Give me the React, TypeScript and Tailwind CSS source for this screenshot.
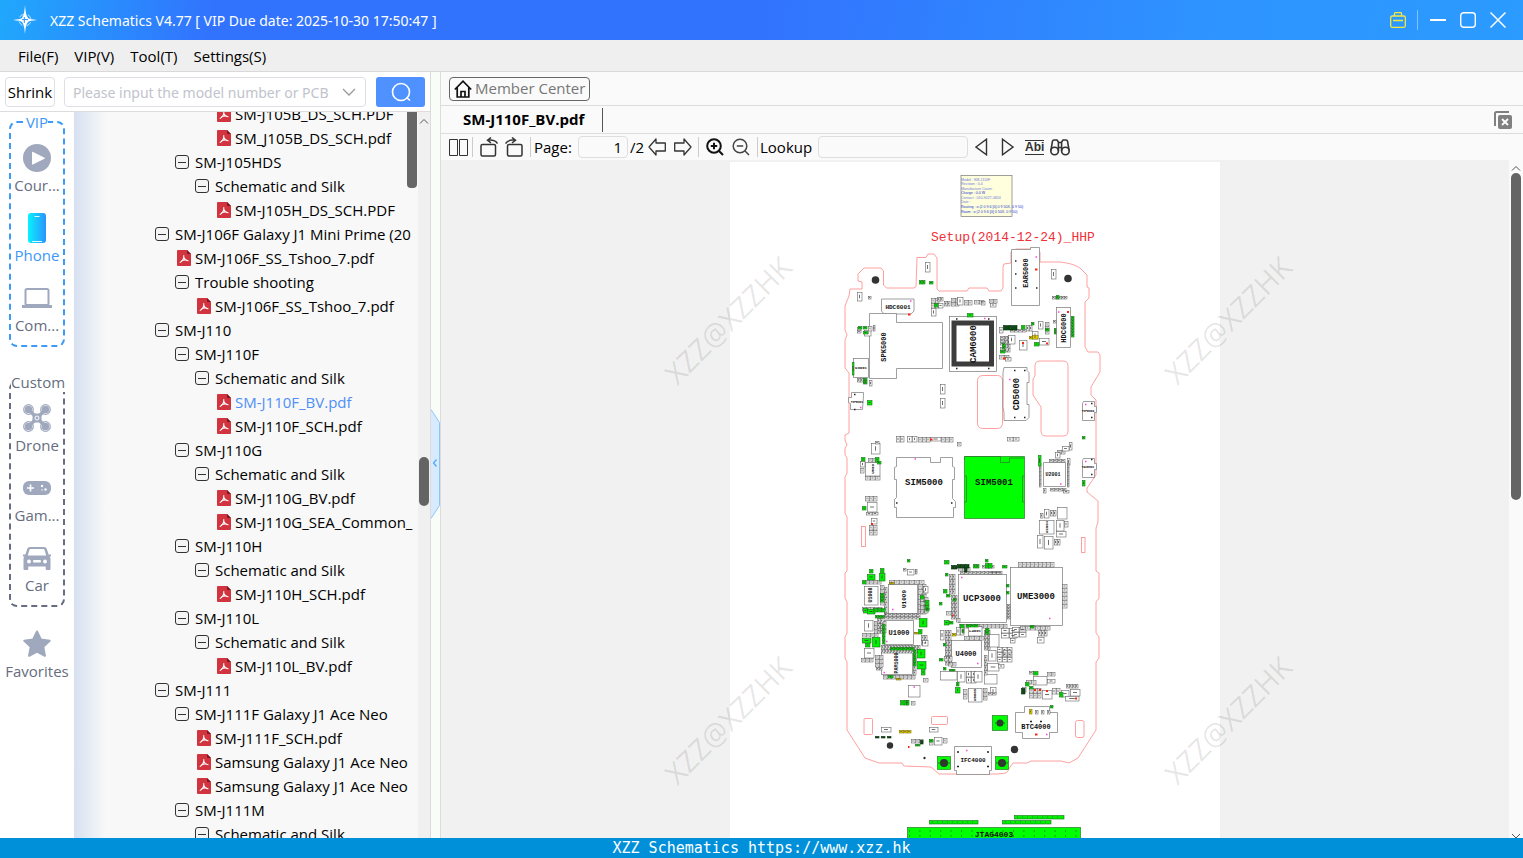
import { useEffect, useRef, useState } from 'react';
import type { ReactNode } from 'react';
import clsx from 'clsx';

type TreeNode = { label: string; level: number; file?: boolean };

const TREE: TreeNode[] = [
  { label: 'SM-J105B_DS_SCH.PDF', level: 3, file: true },
  { label: 'SM_J105B_DS_SCH.pdf', level: 3, file: true },
  { label: 'SM-J105HDS', level: 1 },
  { label: 'Schematic and Silk', level: 2 },
  { label: 'SM-J105H_DS_SCH.PDF', level: 3, file: true },
  { label: 'SM-J106F Galaxy J1 Mini Prime (20', level: 0 },
  { label: 'SM-J106F_SS_Tshoo_7.pdf', level: 1, file: true },
  { label: 'Trouble shooting', level: 1 },
  { label: 'SM-J106F_SS_Tshoo_7.pdf', level: 2, file: true },
  { label: 'SM-J110', level: 0 },
  { label: 'SM-J110F', level: 1 },
  { label: 'Schematic and Silk', level: 2 },
  { label: 'SM-J110F_BV.pdf', level: 3, file: true },
  { label: 'SM-J110F_SCH.pdf', level: 3, file: true },
  { label: 'SM-J110G', level: 1 },
  { label: 'Schematic and Silk', level: 2 },
  { label: 'SM-J110G_BV.pdf', level: 3, file: true },
  { label: 'SM-J110G_SEA_Common_', level: 3, file: true },
  { label: 'SM-J110H', level: 1 },
  { label: 'Schematic and Silk', level: 2 },
  { label: 'SM-J110H_SCH.pdf', level: 3, file: true },
  { label: 'SM-J110L', level: 1 },
  { label: 'Schematic and Silk', level: 2 },
  { label: 'SM-J110L_BV.pdf', level: 3, file: true },
  { label: 'SM-J111', level: 0 },
  { label: 'SM-J111F Galaxy J1 Ace Neo', level: 1 },
  { label: 'SM-J111F_SCH.pdf', level: 2, file: true },
  { label: 'Samsung Galaxy J1 Ace Neo', level: 2, file: true },
  { label: 'Samsung Galaxy J1 Ace Neo', level: 2, file: true },
  { label: 'SM-J111M', level: 1 },
  { label: 'Schematic and Silk', level: 2 },
];

const INDENT = ['pl-[81px]', 'pl-[101px]', 'pl-[121px]', 'pl-[141px]'];

/* ---------- icons ---------- */

function LogoIcon() {
  return (
    <svg className="h-[30px] w-6" viewBox="0 0 24 30" fill="#fff">
      <path d="M12 0c.6 7 1.2 10 3 13v4c-2 3-2.400 6-3 12-.6-6-1-9-3-12v-4c1.800-3 2.400-6 3-13z" />
      <path d="M0 15c5-.5 7.500-1 9-2h6c1.500 1 4 1.500 9 2-5 .5-7.500 1-9 2H9c-1.500-1-4-1.500-9-2z" />
      <circle cx="12" cy="15" r="6" fill="none" stroke="#fff" strokeWidth="1" strokeDasharray="5 4.400" strokeDashoffset="7" opacity=".7" />
      <path d="M11.300 12v6M9 14.600h6" stroke="#2f8ffb" strokeWidth="1" />
    </svg>
  );
}

function PdfIcon() {
  return (
    <svg className="h-4 w-[14px] shrink-0" viewBox="0 0 14 16">
      <path d="M1 0h9l4 4v11a1 1 0 0 1-1 1H1a1 1 0 0 1-1-1V1a1 1 0 0 1 1-1z" fill="#d2343f" />
      <path d="M10 0l4 4h-3a1 1 0 0 1-1-1z" fill="#7e1420" />
      <path d="M6.800 5.500c.2 2.500-.6 5-3.600 6.900M6.900 7.500c.6 2 1.900 2.900 4.200 3.200M4.600 10.800c1.700-.7 3.200-.9 5-.7" fill="none" stroke="#fff" strokeWidth="1.100" strokeLinecap="round" />
    </svg>
  );
}

function CollapseIcon() {
  return (
    <svg className="h-[14px] w-[14px] shrink-0" viewBox="0 0 14 14" fill="none" stroke="#333">
      <rect x=".5" y=".5" width="13" height="13" rx="2.500" fill="#f4f4f4" />
      <path d="M3 7.500h8" />
    </svg>
  );
}

const SideIcons: Record<string, ReactNode> = {
  course: (
    <svg className="h-[28px] w-[28px]" viewBox="0 0 28 28">
      <circle cx="14" cy="14" r="14" fill="#9fa8bd" />
      <path d="M9.500 8.200l12 6-12 6z" fill="#fff" stroke="#fff" strokeLinejoin="round" />
    </svg>
  ),
  phone: (
    <svg className="h-[30px] w-[18px]" viewBox="0 0 18 30">
      <defs>
        <linearGradient id="phone" x1="0" x2="1">
          <stop offset="0" stopColor="#08f2fe" />
          <stop offset="1" stopColor="#2b93ff" />
        </linearGradient>
      </defs>
      <rect width="18" height="30" rx="3" fill="url(#phone)" />
      <path d="M6.500 3.500h5M4 28.500h10" stroke="#dff" strokeWidth="1.200" />
    </svg>
  ),
  computer: (
    <svg className="h-[20px] w-[30px]" viewBox="0 0 30 20" fill="none" stroke="#9fa8bd">
      <rect x="3.500" y="1" width="23" height="16" rx="1.500" strokeWidth="2" />
      <path d="M0 18.500h30" strokeWidth="3" />
    </svg>
  ),
  drone: (
    <svg className="h-[28px] w-[28px]" viewBox="0 0 28 28" fill="none" stroke="#9fa8bd">
      {[[5.500, 5.500], [22.500, 5.500], [5.500, 22.500], [22.500, 22.500]].map(([x, y]) => (
        <g key={`${x}-${y}`}>
          <circle cx={x} cy={y} r="4.800" strokeWidth="1.200" />
          <circle cx={x} cy={y} r="3.800" fill="#9fa8bd" stroke="none" />
        </g>
      ))}
      <path d="M6 6l16 16M22 6L6 22" strokeWidth="3.400" />
      <rect x="9.500" y="9.500" width="9" height="9" rx="3" fill="#9fa8bd" stroke="none" />
      <circle cx="14" cy="14" r="2" fill="#9fa8bd" stroke="#fff" strokeWidth="1" />
    </svg>
  ),
  game: (
    <svg className="h-[14px] w-[28px]" viewBox="0 0 28 14">
      <rect width="28" height="14" rx="6" fill="#9fa8bd" />
      <path d="M7.500 3.500v7M4 7h7" stroke="#fff" strokeWidth="1.600" />
      <circle cx="19" cy="5" r="1.200" fill="#fff" />
      <circle cx="22.500" cy="8.500" r="1.200" fill="#fff" />
      <circle cx="19" cy="9" r=".7" fill="#fff" />
    </svg>
  ),
  car: (
    <svg className="h-[23px] w-[28px]" viewBox="0 0 28 23">
      <path d="M7 0h14c1.500 0 2.300.8 2.800 2l1.800 5.500H28v2h-1.500c.8.8 1 1.700 1 3V22a1 1 0 0 1-1 1h-2.800a1 1 0 0 1-1-1v-2.500H5.300V22a1 1 0 0 1-1 1H1.500a1 1 0 0 1-1-1v-9.500c0-1.300.2-2.200 1-3H0v-2h2.400L4.200 2C4.700.8 5.500 0 7 0z" fill="#9fa8bd" />
      <path d="M7.500 2h13q.8 0 1 .8l1.700 5.700H4.800l1.700-5.700q.2-.8 1-.8z" fill="#fff" />
      <circle cx="6" cy="14.500" r="1.900" fill="#fff" />
      <circle cx="22" cy="14.500" r="1.900" fill="#fff" />
      <rect x="10" y="13" width="8" height="2.500" rx="1" fill="#fff" />
    </svg>
  ),
  star: (
    <svg className="h-[28px] w-[28px]" viewBox="0 0 28 28">
      <path d="M14 1.500l3.900 8 8.800 1.200-6.400 6.200 1.600 8.900-7.900-4.200-7.900 4.200 1.600-8.900-6.400-6.200 8.800-1.200z" fill="#9fa8bd" stroke="#9fa8bd" strokeWidth="2" strokeLinejoin="round" />
    </svg>
  ),
};

function RotateIcon({ flip }: { flip?: boolean }) {
  return (
    <svg className={clsx('h-[20px] w-[18px]', flip && '-scale-x-100')} viewBox="0 0 18 20" fill="none" stroke="#333" strokeWidth="1.500">
      <rect x="1" y="7.500" width="14.500" height="11.500" rx="1.500" />
      <path d="M17.500 6.500C16 4 12.500 2.800 8 3.200M11 .5L7.500 3.200 11 6" />
    </svg>
  );
}

function ArrowIcon({ flip }: { flip?: boolean }) {
  return (
    <svg className={clsx('h-[18px] w-[18px]', flip && '-scale-x-100')} viewBox="0 0 18 18" fill="none" stroke="#333" strokeWidth="1.300">
      <path d="M1 9l7-8v4h9.300v8H8v4z" strokeLinejoin="round" />
    </svg>
  );
}

function ZoomIcon({ plus }: { plus?: boolean }) {
  return (
    <svg className="h-[18px] w-[18px]" viewBox="0 0 18 18" fill="none" stroke={plus ? '#111' : '#444'} strokeWidth={plus ? 2 : 1.500}>
      <circle cx="8" cy="8" r="6.800" />
      <path d="M12.800 12.800L17 17M4.800 8h6.400" />
      {plus && <path d="M8 4.800v6.400" />}
    </svg>
  );
}

function TriangleIcon({ flip }: { flip?: boolean }) {
  return (
    <svg className={clsx('h-[18px] w-[13px]', flip && '-scale-x-100')} viewBox="0 0 13 18" fill="none" stroke="#333" strokeWidth="1.400">
      <path d="M1 9L11.500 1.200v15.600z" />
    </svg>
  );
}

function BinocularsIcon() {
  return (
    <svg className="h-[17px] w-[20px]" viewBox="0 0 20 17" fill="none" stroke="#333" strokeWidth="1.600">
      <circle cx="4.600" cy="12" r="3.800" />
      <circle cx="15.400" cy="12" r="3.800" />
      <path d="M.9 11.500L2.500 2.200C2.700 1.300 3.300 1 4 1h3l1.400 2v9M19.100 11.500L17.500 2.200C17.300 1.300 16.700 1 16 1h-3l-1.400 2v9M8.400 3.500h3.200M8.400 8.500h3.200" />
    </svg>
  );
}

/* ---------- board drawing ---------- */

// x, y, width, height, columns, rows
type Part = [number, number, number, number, number?, number?];

const PLAIN: Part[] = [
  [925, 262, 5, 10], [857, 292, 5, 9], [868, 296, 3, 3], [1051, 269, 5, 10], [940, 384, 5, 10], [940, 398, 5, 10],
  [931, 298, 4, 5, 2, 2], [937, 297, 3, 4, 2, 1], [931, 308, 5, 8, 1, 1], [938, 303, 5, 5], [944, 301, 3, 5, 2, 1], [951, 298, 4, 4, 2, 2],
  [957, 297, 6, 8], [964, 300, 4, 5, 2, 1], [974, 300, 5, 4, 2, 1], [981, 301, 4, 4], [989, 299, 4, 4, 2, 1], [990, 303, 6, 4],
  [857, 327, 4, 3, 1, 2], [864, 330, 7, 6], [868, 326, 4, 5, 1, 1], [873, 325, 2, 6], [857, 378, 3, 4, 2, 1], [869, 380, 3, 6],
  [999, 327, 4, 6], [1000, 336, 4, 3, 1, 3], [1004, 336, 3, 4, 2, 4], [1008, 335, 7, 9], [1010, 329, 4, 3, 4, 1], [1026, 325, 3, 6, 2, 1],
  [1045, 322, 4, 4, 1, 3], [1038, 321, 5, 8], [1032, 331, 6, 8], [1039, 338, 10, 7], [1019, 340, 8, 10], [1000, 347, 4, 4, 2, 1], [999, 355, 5, 4, 2, 1],
  [1005, 357, 6, 4], [1052, 296, 3, 3, 5, 1], [1053, 320, 3, 3],
  [896, 436, 4, 6, 2, 1], [907, 436, 5, 6, 2, 1], [918, 437, 4, 5, 3, 1], [930, 437, 11, 4], [941, 437, 4, 5, 3, 1], [957, 442, 4, 4],
  [1007, 437, 6, 4, 2, 1], [871, 443, 9, 11], [875, 441, 4, 3], [865, 462, 15, 14], [860, 461, 5, 6], [860, 468, 4, 5], [865, 476, 5, 4, 3, 1], [868, 458, 4, 4, 2, 1],
  [867, 502, 10, 10], [865, 496, 4, 5, 3, 1], [866, 512, 6, 3, 2, 1], [871, 518, 6, 6], [869, 525, 4, 5, 2, 2],
  [1057, 450, 4, 4, 2, 1], [1062, 446, 7, 5], [1069, 442, 3, 8], [1055, 452, 5, 6], [1049, 459, 4, 3, 4, 1], [1067, 458, 3, 7], [1039, 463, 2, 4, 1, 6],
  [1067, 463, 2, 4, 1, 6], [1043, 488, 3, 5], [1050, 488, 4, 3, 4, 1], [1063, 490, 6, 3],
  [1040, 513, 3, 5], [1044, 509, 5, 9], [1050, 510, 3, 6, 2, 1], [1057, 507, 10, 12], [1039, 520, 15, 14], [1056, 520, 8, 11], [1064, 521, 4, 6], [1056, 531, 10, 6],
  [1037, 535, 6, 13], [1044, 536, 9, 13], [1054, 539, 3, 6, 2, 1],
  // left cluster
  [907, 569, 7, 6], [903, 568, 3, 3], [915, 569, 2, 5], [864, 586, 14, 19], [865, 580, 4, 4, 4, 1], [880, 585, 4, 4, 1, 5], [884, 587, 3, 5, 1, 6], [889, 580, 5, 4, 7, 1],
  [918, 584, 4, 5, 2, 6], [923, 586, 5, 7, 1, 1], [884, 613, 4, 3, 9, 2], [862, 607, 4, 4, 5, 1], [864, 620, 9, 11], [874, 621, 4, 4, 3, 3],
  [862, 633, 4, 4, 4, 1], [864, 648, 10, 10], [861, 658, 4, 4, 3, 1], [877, 618, 3, 5, 2, 3], [881, 645, 3, 4, 13, 2], [875, 655, 4, 4, 2, 3], [876, 667, 3, 3, 2, 1],
  [883, 675, 4, 4, 8, 1], [913, 655, 3, 5, 1, 4], [920, 597, 4, 4, 2, 4], [921, 635, 3, 5, 2, 2], [922, 640, 6, 6], [908, 685, 12, 12], [911, 701, 4, 4], [923, 678, 5, 4],
  // right cluster
  [949, 574, 3, 5, 2, 4], [951, 595, 3, 4, 2, 6], [946, 611, 5, 4], [958, 567, 4, 4, 3, 1], [982, 565, 3, 3, 4, 1], [990, 571, 4, 3, 3, 1], [1018, 562, 4, 5, 9, 1],
  [1062, 584, 5, 4, 1, 6], [1007, 604, 3, 3, 1, 5], [960, 571, 4, 3, 10, 1], [959, 624, 4, 4, 12, 1], [940, 630, 4, 10, 1, 1], [945, 630, 3, 5, 2, 7], [944, 656, 4, 5, 2, 1],
  [956, 627, 4, 8, 2, 1], [968, 626, 14, 10], [964, 636, 5, 4, 4, 1], [984, 630, 3, 4, 2, 5], [989, 634, 10, 13], [1001, 628, 8, 5, 2, 2], [1012, 627, 7, 5, 2, 2], [1020, 626, 5, 4, 6, 1],
  [1038, 630, 3, 6, 3, 1], [1037, 637, 7, 6], [988, 650, 8, 11], [997, 647, 5, 5, 3, 3], [987, 663, 12, 8], [940, 671, 17, 9], [957, 671, 8, 11], [966, 671, 5, 6, 2, 2], [974, 671, 8, 11],
  [984, 674, 13, 10], [968, 688, 14, 14], [963, 689, 4, 5, 1, 2], [983, 688, 4, 4, 1, 3], [990, 687, 6, 7], [984, 655, 3, 5, 1, 4], [1003, 650, 4, 6, 2, 1], [988, 692, 4, 3, 2, 1],
  [948, 662, 4, 4, 2, 1], [956, 618, 4, 4], [1010, 638, 5, 5], [998, 664, 6, 4],
  // lower right cluster
  [1033, 676, 14, 9], [1026, 680, 5, 4, 2, 1], [1047, 672, 4, 4, 2, 1], [1047, 679, 8, 4], [1029, 688, 4, 5, 3, 2], [1042, 690, 10, 9], [1052, 688, 4, 6, 2, 1], [1061, 690, 8, 7], [1070, 689, 10, 7], [1065, 696, 14, 5],
  [1066, 684, 3, 4, 4, 1], [1022, 687, 4, 5], [1029, 671, 4, 3],
  // bottom
  [881, 727, 10, 5], [929, 727, 9, 5], [911, 739, 4, 4, 3, 1], [934, 737, 8, 8], [943, 738, 4, 5], [929, 740, 4, 5],
  [1035, 710, 3, 4], [1041, 710, 3, 4], [1047, 710, 3, 4],
];

const GREEN: Part[] = [
  [919, 280, 3, 4, 2, 1], [929, 281, 4, 3], [934, 303, 4, 4], [967, 313, 6, 4], [1056, 295, 3, 4], [858, 326, 4, 3], [863, 326, 4, 3], [863, 331, 5, 3],
  [1054, 328, 2, 3, 1, 2], [1071, 316, 3, 3, 1, 7], [852, 362, 2, 13], [863, 378, 4, 2, 1, 3], [867, 400, 5, 5], [1002, 343, 3, 3, 1, 2], [1000, 350, 5, 3], [1034, 342, 5, 4],
  [1021, 325, 4, 4], [1031, 322, 3, 3], [1045, 328, 4, 3], [1082, 436, 3, 3], [861, 457, 4, 4], [875, 457, 4, 5], [877, 461, 4, 3], [862, 506, 4, 4],
  [1038, 455, 3, 11], [1082, 480, 3, 6], [907, 559, 3, 3], [944, 560, 5, 4], [985, 559, 3, 3],
  [867, 574, 8, 6], [879, 573, 6, 8], [862, 580, 4, 4], [869, 569, 4, 4, 1, 1], [880, 568, 4, 5], [880, 593, 4, 3, 1, 3], [863, 608, 5, 5], [867, 609, 8, 5], [873, 608, 4, 4, 3, 1],
  [875, 615, 3, 3, 3, 1], [919, 618, 8, 9], [918, 629, 4, 5], [862, 638, 9, 5], [872, 637, 8, 10], [865, 643, 5, 4], [882, 624, 3, 4, 1, 5], [890, 647, 4, 3, 6, 1],
  [917, 649, 8, 9], [917, 661, 9, 8], [913, 650, 3, 4, 1, 4], [921, 669, 4, 6], [920, 595, 4, 4], [925, 600, 4, 5, 1, 2], [926, 608, 3, 3],
  [888, 675, 5, 3], [900, 700, 4, 5, 2, 1], [906, 700, 3, 5],
  [973, 564, 3, 4, 2, 1], [985, 563, 4, 5], [988, 563, 4, 5], [1002, 565, 5, 3], [945, 573, 3, 3], [943, 589, 4, 4, 1, 1], [946, 594, 4, 3], [939, 602, 3, 3], [953, 598, 3, 3],
  [944, 620, 5, 5], [949, 621, 4, 3], [960, 624, 4, 4], [966, 624, 4, 3, 3, 1], [1006, 584, 3, 3], [1006, 591, 3, 3], [985, 628, 4, 3, 1, 2], [962, 629, 2, 4], [1030, 625, 4, 3],
  [943, 643, 3, 3], [939, 658, 4, 3], [943, 667, 3, 3], [949, 669, 3, 2, 2, 1], [956, 682, 3, 4], [955, 687, 5, 6],
  [1033, 671, 5, 4], [1025, 682, 4, 4], [1029, 686, 4, 3], [1059, 692, 4, 5], [1050, 705, 3, 3],
  [929, 739, 4, 3], [915, 744, 5, 2],
  [929, 820, 49, 4], [1002, 820, 49, 4], [1014, 815, 50, 4],
];

const DARK_GREEN: Part[] = [
  [1003, 325, 7, 5, 2, 1], [951, 565, 3, 4, 2, 1], [957, 564, 4, 4, 3, 1], [964, 568, 3, 4], [1021, 688, 4, 6], [875, 736, 4, 2], [881, 736, 4, 2], [887, 736, 4, 2], [920, 740, 3, 4],
];

const YELLOW: Part[] = [
  [1032, 335, 6, 4], [1029, 336, 3, 3], [952, 633, 4, 3], [914, 632, 4, 2], [889, 582, 5, 2], [896, 678, 5, 2], [899, 730, 4, 3, 3, 1], [1029, 709, 3, 5],
];

function Parts({ items, fill, stroke }: { items: Part[]; fill: string; stroke: string }) {
  const cells = items.flatMap(([x, y, w, h, cols = 1, rows = 1]) =>
    Array.from({ length: cols * rows }, (_, i) => [x + (i % cols) * w, y + Math.floor(i / cols) * h, w, h]),
  );
  const marked = cells.filter(([, , w, h]) => w * h < 120);
  return (
    <g>
      {cells.map(([x, y, w, h], i) => (
        <rect key={i} x={x + 0.5} y={y + 0.5} width={w - 0.5} height={h - 0.5} fill={fill} stroke={stroke} strokeWidth=".6" />
      ))}
      <path
        d={marked.map(([x, y, w, h]) => (w >= h ? `M${x + w * 0.3} ${y + h / 2}h${w * 0.4}` : `M${x + w / 2} ${y + h * 0.3}v${h * 0.4}`)).join('')}
        stroke="#333"
        strokeWidth=".7"
      />
    </g>
  );
}

function Label({ x, y, size = 9, vertical, children }: { x: number; y: number; size?: number; vertical?: boolean; children: string }) {
  return (
    <text
      x={x}
      y={y}
      fontSize={size}
      fontWeight="bold"
      textAnchor="middle"
      dominantBaseline="central"
      fill="#111"
      transform={vertical ? `rotate(-90 ${x} ${y})` : undefined}
    >
      {children}
    </text>
  );
}

function BoardDrawing() {
  return (
    <svg className="h-[676px] w-[490px] font-['Liberation_Mono',monospace]" viewBox="730 162 490 676" role="img" aria-label="SM-J110F board view">
      {/* Notes box */}
      <rect x="961" y="175.500" width="51" height="41" fill="#ffffde" stroke="#777" strokeWidth=".7" />
      <g className="font-['Liberation_Sans',sans-serif]" fontSize="3.600" fill="#6a78d8">
        <text x="961" y="180.500">Model : SM-J110F</text>
        <text x="961" y="185">Revision : 0.4</text>
        <text x="961" y="189.500">Manufacture Count :</text>
        <text x="961" y="194" fill="#1733d0">Charge : 0.0 W</text>
        <text x="961" y="198.500">Contact : 010-9027-0824</text>
        <text x="961" y="203">Date :</text>
        <text x="961" y="208" fill="#1733d0">Routing : o (2 0 9.6 [0] 0 9 50X, 0 9 50)</text>
        <text x="961" y="212.500" fill="#1733d0">Room : o (2 0 9.6 [0] 0 50X, 0 9 50)</text>
      </g>
      <text x="931" y="241" fontSize="13" fill="#f03038">
        Setup(2014-12-24)_HHP
      </text>

      {/* Board outline */}
      <g fill="none" stroke="#f88" strokeWidth=".8">
        <path d="M850 289h12v-7l-4-1v-7l6-6h17l2.500 3v14l3 3h27.500l2-1.500 1-29h9l2-3.500h6l3 4v31l2 2h28l2-3h18l2 3h12l2-3v-21l1-3 7-1v-11l5-3h14l3 3h7v10h20c7 1 14 2 20 6l7 7v12l2 1v10l-4 4v45l3 5h10l2 3v17l-9 15v8l5 5v75l-9 13v4l11 9v21l-2 6v43l3 2v25l-3 4v31l3 4v21l-3 4v68l-18 28-9 5-8-2h-30l-4 2h-14c-4 4-4 8-7 10l-9 1h-58l-8-7-27-1-2-3h-23l-14-5-18-28v-68l-2-4v-21l2-4v-31l-2-4v-25l2-2v-54l-2-4v-36l2-4v-15l-2-3v-7l2-3-2-5v-5l4-2v-60l-4-5v-28l2-5-2-5v-24l4-10z" />
        <rect x="977.500" y="375.500" width="25" height="53" rx="5" />
        <path d="M1040 361h23q5 0 5 5v65q0 5-5 5h-17q-5 0-5-5v-24l-8-12v-16l2-3v-10q0-5 5-5z" />
        <rect x="861.500" y="526.500" width="4" height="20" />
        <rect x="1081.500" y="537.500" width="3.500" height="15" />
        <rect x="864" y="718.500" width="8.500" height="16" rx="1" />
        <rect x="931.500" y="716.500" width="16" height="8" rx="1" />
        <rect x="1075.500" y="720.500" width="8.500" height="17" rx="2" />
      </g>

      {/* Large parts */}
      <g fill="#fff" stroke="#777" strokeWidth=".7">
        <path d="M1011.500 249.500h19v-2h9v58h-28z" />
        <path d="M881.500 299h32.500v12l-3 3h-27l-2.500-3z" />
        <path d="M869.500 313.500h27v9h46v46h-46v10h-27z" />
        <rect x="949.500" y="316.500" width="47" height="55" />
        <rect x="1056.500" y="307.500" width="14" height="40" />
        <path d="M1004 367.500h23v3l2 2v10h-2v22h2v13l-3 3h-22v-8l-1-5v-35z" />
        <rect x="853.500" y="358.500" width="15" height="19" />
        <path d="M851.500 392.500h12v3l-1 14h-12v-6l-2-1v-5h3z" />
        <path d="M1083.500 401.500h11v5h2v6h-2v8h-12v-17z" />
        <path d="M1083.500 458.500h11v5h2v6h-2v8h-12v-17z" />
        <path d="M896.500 457.500h34v5h10v-5h12v9l2 1v12h-2v19l3 3v6h-2v10h-57v-10h-2v-8l2-2v-18h-2v-12l2-1z" />
        <path d="M1043.500 462.500h22v24h-22z" />
        <rect x="888.500" y="584.500" width="29" height="29" />
        <rect x="884.500" y="620.500" width="29" height="24" />
        <rect x="881.500" y="652.500" width="31" height="22" />
        <rect x="958.500" y="574.500" width="48" height="48" />
        <rect x="1010.500" y="567.500" width="52" height="58" />
        <rect x="951.500" y="640.500" width="30" height="27" />
        <path d="M1024.500 706.500h25v6h8v20h-8v6h-27v-6h-7v-20h9z" />
        <path d="M954.500 746.500h37v24h-2v4h-33v-4h-2z" />
      </g>
      <g fill="none" stroke="#3c3c3c">
        <rect x="954" y="323" width="37.500" height="41" strokeWidth="5" />
      </g>
      <g fill="#0f0" stroke="#2a7a2a" strokeWidth=".7">
        <path d="M964.500 456.500h60v62h-60z" />
        <path d="M964.500 460v-3.500h36v6h9v-4.500h15M964.500 476h2v26h-2M1024.500 476h-2v26h2" fill="none" />
        <rect x="992.500" y="715.500" width="15" height="15" />
        <rect x="937.500" y="756.500" width="13" height="13" />
        <rect x="995.500" y="756.500" width="13" height="13" />
        <rect x="907.500" y="827.500" width="173" height="14" />
      </g>

      <Parts items={PLAIN} fill="#fff" stroke="#666" />
      <Parts items={GREEN} fill="#00f000" stroke="#187018" />
      <Parts items={DARK_GREEN} fill="#0a4d12" stroke="#062d0a" />
      <Parts items={YELLOW} fill="#f2dc00" stroke="#7d7200" />

      {/* Holes */}
      <g fill="#333">
        <circle cx="875.500" cy="280" r="3.800" />
        <circle cx="1068" cy="278.500" r="3.800" />
        <circle cx="890" cy="745.500" r="3.200" />
        <circle cx="1014.500" cy="749.500" r="3.700" />
        <circle cx="1000" cy="723" r="3.500" />
        <circle cx="944" cy="763" r="4" />
        <circle cx="1002" cy="763" r="4" />
        <circle cx="924.500" cy="758" r="1.200" />
      </g>
      <path d="M995 723h10M938 763h12M996 763h12" stroke="#1a5a1a" strokeWidth=".8" />
      <path
        d="M1015 261h1.500M1015 274h1.500M1015 288h1.500M1036 288h1.500M956 319h1.500M988 319h1.500M956 368.500h1.500M988 368.500h1.500M1014 370.500h1.500M1024 370.500h1.500M1014 417.500h1.500M1024 417.500h1.500M854 394.500h1.500M854 409.500h1.500M1091 403.500h1.500M1091 417.500h1.500M1091 459.500h1.500M1091 474.500h1.500M957 752h2M987 752h2M957 766.500h2M987 766.500h2M1030 721.500h2M1040 721.500h2M896 503h1.500M951 503h1.500"
        stroke="#222"
        strokeWidth="1.500"
      />
      <path d="M909 831h171M909 836h171" stroke="#111" strokeWidth=".8" strokeDasharray="1 9.400" />
      <path d="M932 822h44M1005 822h44M1017 817h44" stroke="#063" strokeWidth=".8" strokeDasharray="1 4" />
      <path
        d="M1035.500 257h1.500M984 318.500h1.500M1009 379.500h1.500M910 301h1.500M860 407.500h1.500M1085 404.500h1.500M1085 461.500h1.500M914.500 459h1.500M1060 484h1.500M961 577.500h1.500M1049 618.500h1.500M892 609.500h1.500M886 641.500h1.500M883.500 672.500h1.500M977 663.500h1.500M966 750.500h1.500M1046 734.500h1.500M913.500 687h1.500M1058 312h1.500"
        stroke="#f4d"
        strokeWidth="1.500"
      />
      <path
        d="M1035 269.500h2.500M908 314.500h2.500M1003 358.500h2.500M930 439.500h2.500M1034 690h2M1039 690h2M1046 691h2M1075 698.500h2M1035 734.500h2.500M871 524h2M1067 312h2M1046 343.500h2M1022 343h2M952 615.500h1.500M908 747h1.500"
        stroke="#f42a10"
        strokeWidth="2"
      />

      {/* Designators */}
      <Label x={1026} y={273} size={7} vertical>EAR5000</Label>
      <Label x={898} y={307} size={6}>HDC6001</Label>
      <Label x={884} y={347} size={7} vertical>SPK5000</Label>
      <Label x={974} y={344} size={9} vertical>CAM6000</Label>
      <Label x={1064} y={328} size={7} vertical>HDC6000</Label>
      <Label x={1017} y={394} size={9} vertical>CD5000</Label>
      <Label x={861} y={368} size={4}>U3001</Label>
      <Label x={857} y={402} size={3}>TSP5001</Label>
      <Label x={1088} y={411} size={3}>TSP5002</Label>
      <Label x={1088} y={467} size={3}>TAC5001</Label>
      <Label x={924} y={483}>SIM5000</Label>
      <Label x={994} y={483}>SIM5001</Label>
      <Label x={1053} y={475} size={5}>U2001</Label>
      <Label x={873} y={469} size={4} vertical>U500</Label>
      <Label x={1047} y={527} size={4} vertical>U2004</Label>
      <Label x={871} y={595} size={5} vertical>U1008</Label>
      <Label x={904} y={599} size={6} vertical>U1009</Label>
      <Label x={899} y={633} size={7}>U1000</Label>
      <Label x={897} y={663} size={5} vertical>PAM1000</Label>
      <Label x={982} y={599} size={9}>UCP3000</Label>
      <Label x={1036} y={597}>UME3000</Label>
      <Label x={966} y={654} size={7}>U4000</Label>
      <Label x={975} y={695} size={4} vertical>U5000</Label>
      <Label x={975} y={631} size={4}>L4001</Label>
      <Label x={1036} y={727} size={7}>BTC4000</Label>
      <Label x={973} y={760} size={6}>IFC4000</Label>
      <Label x={994} y={834} size={8}>JTAG4003</Label>
    </svg>
  );
}

/* ---------- panels ---------- */

function SideItem({ icon, label, active }: { icon: string; label: string; active?: boolean }) {
  return (
    <button className={clsx('flex flex-col items-center gap-[2px] text-[15px] leading-5', active ? 'text-[#3d97f7]' : 'text-[#666d80]')}>
      <span className="flex h-[30px] items-center">{SideIcons[icon]}</span>
      <span className="whitespace-nowrap">{label}</span>
    </button>
  );
}

function SideNav() {
  return (
    <nav className="flex w-[74px] shrink-0 flex-col items-center bg-white">
      <fieldset className="flex w-14 min-w-0 flex-col items-center gap-[18px] rounded-lg border-2 border-dashed border-[#3d9bf5] pt-[11px] pb-[10px]">
        <legend className="mx-auto text-[15px] leading-5 text-[#3d97f7]">VIP</legend>
        <SideItem icon="course" label="Cour..." />
        <SideItem icon="phone" label="Phone" active />
        <SideItem icon="computer" label="Com..." />
      </fieldset>
      <fieldset className="mt-[25px] flex w-14 min-w-0 flex-col items-center gap-[18px] rounded-lg border-2 border-dashed border-[#666d80] pt-[11px] pb-[10px]">
        <legend className="mx-auto text-[15px] leading-5 text-[#666d80]">Custom</legend>
        <SideItem icon="drone" label="Drone" />
        <SideItem icon="game" label="Gam..." />
        <SideItem icon="car" label="Car" />
      </fieldset>
      <div className="mt-[22px]">
        <SideItem icon="star" label="Favorites" />
      </div>
    </nav>
  );
}

function FileTree() {
  const [selected, setSelected] = useState(12);
  const listRef = useRef<HTMLUListElement>(null);

  // Keep the list scrolled part way into the first row
  useEffect(() => {
    if (listRef.current) listRef.current.scrollTop = 10;
  }, []);

  return (
    <div className="relative flex min-w-0 flex-1 bg-[#f8f8f8] bg-linear-to-r from-[#d7e1f1] to-[#f8f8f8] to-[32px]">
      <ul ref={listRef} className="min-w-0 flex-1 overflow-hidden pr-1">
        {TREE.map((node, i) => (
          <li key={i}>
            <button
              onClick={() => setSelected(i)}
              className={clsx(
                'flex h-6 w-full items-center overflow-hidden text-[15px] whitespace-nowrap',
                INDENT[node.level],
                i === selected ? 'text-[#4f8ff7]' : 'text-black',
              )}
            >
              <span className={clsx('flex w-5 shrink-0', node.file && 'pl-[2px]')}>{node.file ? <PdfIcon /> : <CollapseIcon />}</span>
              <span>{node.label}</span>
            </button>
          </li>
        ))}
      </ul>
      <div className="absolute top-0 right-[13px] h-[76px] w-[10px] rounded-b-sm bg-[#666]" />
      <div className="flex w-3 shrink-0 flex-col items-center bg-[#f0f0f0]">
        <svg className="mt-[5px] h-2 w-[10px]" viewBox="0 0 10 8" fill="none" stroke="#555">
          <path d="M1 6.500l4-4 4 4" />
        </svg>
        <div className="mt-[332px] h-[49px] w-[10px] rounded-full bg-[#646464]" />
      </div>
    </div>
  );
}

function Splitter() {
  return (
    <button aria-label="Collapse panel" className="flex w-[11px] shrink-0 items-center border-x border-[#dcdcdc] bg-[#f8fdf8]">
      <svg className="mt-[18px] h-[110px] w-[9px]" viewBox="0 0 9 110" fill="#d8ebfe" stroke="#8cc5f8">
        <path d="M0 .5l8.500 13v83L0 109.500" />
        <path d="M5.500 50.500L2.500 54l3 3.500" fill="none" stroke="#55a8f5" strokeWidth="1.300" />
      </svg>
    </button>
  );
}

function LeftPanel() {
  return (
    <aside className="flex w-[430px] shrink-0 flex-col">
      <div className="flex h-10 shrink-0 items-center border-b border-[#dcdcdc] bg-white px-[5px] pt-px">
        <button className="h-[30px] w-[50px] rounded border border-[#dcdfe6] bg-white text-[15px]">Shrink</button>
        <label className="ml-[9px] flex h-[30px] flex-1 items-center rounded border border-[#dcdfe6] pr-[9px] pl-2">
          <input
            aria-label="Model search"
            placeholder="Please input the model number or PCB"
            className="min-w-0 flex-1 font-['Noto_Sans',sans-serif] text-[14px] outline-none placeholder:text-[#c0c4cc]"
          />
          <svg className="ml-1 h-2 w-[14px] shrink-0" viewBox="0 0 14 8" fill="none" stroke="#999" strokeWidth="1.300">
            <path d="M1 1l6 6 6-6" />
          </svg>
        </label>
        <button aria-label="Search" className="ml-[10px] flex h-[30px] w-[49px] items-center justify-center rounded-[3px] bg-[#4f92ff]">
          <svg className="h-5 w-5" viewBox="0 0 20 20" fill="none" stroke="#fff" strokeWidth="1.600">
            <circle cx="10" cy="10" r="8.500" />
            <path d="M15.500 15.500l3.500 3" />
          </svg>
        </button>
      </div>
      <div className="flex min-h-0 flex-1">
        <SideNav />
        <FileTree />
      </div>
    </aside>
  );
}

function Separator() {
  return <div className="h-5 w-px shrink-0 bg-[#ccc]" />;
}

function Toolbar() {
  return (
    <div className="flex h-[26px] shrink-0 items-center bg-[#fafafa] pl-2 text-[15px]">
      <button aria-label="Two pages">
        <svg className="h-[17px] w-[19px]" viewBox="0 0 19 17" fill="none" stroke="#333">
          <path d="M.5.5h8v16h-8zM10.500.5h8v16h-8z" />
        </svg>
      </button>
      <div className="ml-1 flex items-center gap-[7px]">
        <Separator />
        <button aria-label="Rotate left"><RotateIcon /></button>
        <button aria-label="Rotate right"><RotateIcon flip /></button>
        <Separator />
      </div>
      <label htmlFor="page" className="ml-[3px] w-11">Page:</label>
      <input id="page" defaultValue="1" className="h-[22px] w-[50px] rounded-sm border border-[#dedede] pr-[5px] text-right" />
      <span className="ml-[2px] w-[18px]">/2</span>
      <div className="flex items-center gap-2">
        <button aria-label="Previous page"><ArrowIcon /></button>
        <button aria-label="Next page"><ArrowIcon flip /></button>
      </div>
      <div className="ml-[6px] flex items-center gap-[7px]">
        <Separator />
        <div className="flex items-center gap-2">
          <button aria-label="Zoom in"><ZoomIcon plus /></button>
          <button aria-label="Zoom out"><ZoomIcon /></button>
        </div>
        <Separator />
      </div>
      <label htmlFor="lookup" className="ml-[2px] w-[58px]">Lookup</label>
      <input id="lookup" className="h-[22px] w-[150px] rounded-sm border border-[#dedede] px-1" />
      <div className="ml-[7px] flex items-center gap-[13px]">
        <button aria-label="Find previous"><TriangleIcon /></button>
        <button aria-label="Find next"><TriangleIcon flip /></button>
      </div>
      <button className="ml-[11px] border-y border-[#333] font-['Liberation_Sans',sans-serif] text-[12px] leading-[13px] font-bold text-[#333]">Abi</button>
      <button aria-label="Search in all" className="ml-[6px]"><BinocularsIcon /></button>
    </div>
  );
}

const WATERMARKS = ['top-[140px] left-[187px]', 'top-[140px] left-[687px]', 'top-[540px] left-[187px]', 'top-[540px] left-[687px]'];

function Viewer() {
  return (
    <main className="relative flex min-h-0 flex-1 overflow-hidden bg-[#f1f1f1]">
      <div className="flex min-w-0 flex-1 justify-center overflow-hidden pt-[2px]">
        <div className="h-full bg-white">
          <BoardDrawing />
        </div>
      </div>
      {WATERMARKS.map((pos) => (
        <span
          key={pos}
          className={clsx(
            "pointer-events-none absolute h-10 w-[200px] -rotate-45 text-center font-['Open_Sans',sans-serif] text-[29px] leading-10 text-black/10",
            pos,
          )}
        >
          XZZ@XZZHK
        </span>
      ))}
      <div className="flex w-[14px] shrink-0 flex-col items-center bg-[#fafafa]">
        <svg className="mt-[5px] h-2 w-[10px]" viewBox="0 0 10 8" fill="none" stroke="#555">
          <path d="M1 5.500l4-4 4 4" />
        </svg>
        <div className="h-[327px] w-[10px] rounded-full bg-[#646464]" />
        <svg className="mt-auto h-1 w-[10px]" viewBox="0 0 10 4" fill="none" stroke="#555">
          <path d="M1 0l4 4 4-4" />
        </svg>
      </div>
    </main>
  );
}

export default function App() {
  return (
    <div className="flex h-screen flex-col overflow-hidden bg-[#fafafa] font-['Open_Sans',sans-serif] text-black">
      <header className="flex h-10 shrink-0 items-center bg-[linear-gradient(100deg,#20a8fc_0%,#3273fe_14%,#3273fe_50%,#2e94ff_80%,#2b9bff_100%)] pr-[17px] pl-[13px] text-white">
        <LogoIcon />
        <h1 className="ml-[13px] flex-1 font-['Noto_Sans',sans-serif] text-[14px]">XZZ Schematics V4.77 [ VIP Due date: 2025-10-30 17:50:47 ]</h1>
        <button aria-label="Toolbox">
          <svg className="h-4 w-4" viewBox="0 0 16 16" fill="none" stroke="#f3e83c" strokeWidth="1.300">
            <rect x=".7" y="4" width="14.600" height="11.300" rx="1.500" />
            <path d="M4.500 4V1.500q0-.8.8-.8h5.400q.8 0 .8.800V4M3 8.500h10" />
          </svg>
        </button>
        <div className="ml-[11px] h-5 w-px bg-white/40" />
        <div className="ml-3 flex items-center gap-[14px]">
          <button aria-label="Minimize">
            <svg className="h-4 w-4" viewBox="0 0 16 16" stroke="#fff" strokeWidth="2"><path d="M0 8h16" /></svg>
          </button>
          <button aria-label="Maximize">
            <svg className="h-4 w-4" viewBox="0 0 16 16" fill="none" stroke="#fff" strokeWidth="1.400"><rect x=".7" y=".7" width="14.600" height="14.600" rx="3" /></svg>
          </button>
          <button aria-label="Close">
            <svg className="h-4 w-4" viewBox="0 0 16 16" stroke="#fff" strokeWidth="1.500"><path d="M.5.5l15 15M15.500.5l-15 15" /></svg>
          </button>
        </div>
      </header>

      <div className="flex h-8 shrink-0 items-center gap-4 border-b border-[#d9d9d9] bg-[#efefef] pt-[2px] pl-[18px] text-[15px]">
        <button>File(F)</button>
        <button>VIP(V)</button>
        <button>Tool(T)</button>
        <button>Settings(S)</button>
      </div>

      <div className="flex min-h-0 flex-1">
        <LeftPanel />
        <Splitter />
        <section className="flex min-w-0 flex-1 flex-col">
          <div className="flex h-[34px] shrink-0 items-center border-b border-[#dcdcdc] pl-2">
            <button className="flex h-6 items-center gap-[3px] rounded border border-[#666] px-1 text-[15px] text-[#777]">
              <svg className="h-[18px] w-[18px]" viewBox="0 0 18 18" fill="none" stroke="#111" strokeWidth="1.700">
                <path d="M.8 9.500L9 1.200l8.200 8.300M3.200 7.500V17h11.600V7.500M7 17v-5.500h4V17" />
              </svg>
              Member Center
            </button>
          </div>
          <div className="flex h-7 shrink-0 items-center justify-between border-b border-[#dcdcdc] pr-[11px] pl-[22px]">
            <button className="h-6 border-r border-[#555] pr-[18px] text-[15px] font-bold">SM-J110F_BV.pdf</button>
            <button aria-label="Close all tabs">
              <svg className="h-[18px] w-[18px]" viewBox="0 0 18 18">
                <path d="M1 15V2.500Q1 1 2.500 1H15" fill="none" stroke="#808080" strokeWidth="2" />
                <rect x="4" y="4" width="14" height="14" rx="2" fill="#808080" />
                <path d="M8 8l6 6M14 8l-6 6" stroke="#fff" strokeWidth="1.800" />
              </svg>
            </button>
          </div>
          <Toolbar />
          <Viewer />
        </section>
      </div>

      <footer className="flex h-5 shrink-0 items-center justify-center bg-[#0090da] font-['DejaVu_Sans_Mono',monospace] text-[15px] text-white">
        XZZ Schematics https://www.xzz.hk
      </footer>
    </div>
  );
}
